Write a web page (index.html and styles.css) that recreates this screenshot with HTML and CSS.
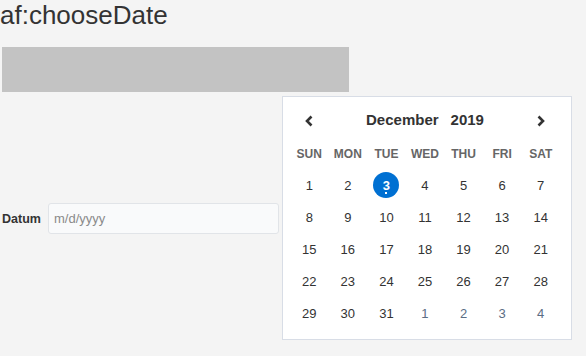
FILE: index.html
```html
<!DOCTYPE html>
<html lang="en">
<head>
    <meta charset="UTF-8">
    <meta name="viewport" content="width=device-width, initial-scale=1.0">
    <title>af:chooseDate</title>
    <link rel="stylesheet" href="styles.css">
</head>
<body>

    <h1 class="page-title">af:chooseDate</h1>

    <div class="placeholder-bar"></div>

    <div class="field-row">
        <label class="field-label" for="datum">Datum</label>
        <div class="date-field">
            <input type="text" id="datum" class="date-input" placeholder="m/d/yyyy">

            <div class="datepicker">
                <div class="dp-header">
                    <button class="dp-nav" title="Previous Month">
                        <svg width="10" height="12" viewBox="0 0 10 12"><path d="M7.5 1.5 L3 6 L7.5 10.5" fill="none" stroke="#333" stroke-width="2.6"/></svg>
                    </button>
                    <div class="dp-month"><span>December</span><span>2019</span></div>
                    <button class="dp-nav" title="Next Month">
                        <svg width="10" height="12" viewBox="0 0 10 12"><path d="M2.5 1.5 L7 6 L2.5 10.5" fill="none" stroke="#333" stroke-width="2.6"/></svg>
                    </button>
                </div>

                <table class="dp-table">
                    <thead>
                        <tr><th>SUN</th><th>MON</th><th>TUE</th><th>WED</th><th>THU</th><th>FRI</th><th>SAT</th></tr>
                    </thead>
                    <tbody>
                        <tr><td>1</td><td>2</td><td><span class="dp-day selected">3</span></td><td>4</td><td>5</td><td>6</td><td>7</td></tr>
                        <tr><td>8</td><td>9</td><td>10</td><td>11</td><td>12</td><td>13</td><td>14</td></tr>
                        <tr><td>15</td><td>16</td><td>17</td><td>18</td><td>19</td><td>20</td><td>21</td></tr>
                        <tr><td>22</td><td>23</td><td>24</td><td>25</td><td>26</td><td>27</td><td>28</td></tr>
                        <tr><td>29</td><td>30</td><td>31</td><td class="other">1</td><td class="other">2</td><td class="other">3</td><td class="other">4</td></tr>
                    </tbody>
                </table>
            </div>
        </div>
    </div>

</body>
</html>
```

FILE: styles.css
```css
html {
    background-color: #f4f4f4;
}
body {
    font-family: "Liberation Sans", Arial, sans-serif;
    background-color: #f4f4f4;
    color: #333;
    margin: 0;
    padding: 0;
    min-height: 356px;
}
.page-title {
    font-size: 26px;
    font-weight: normal;
    line-height: 30px;
    margin: 0;
    color: #333;
}
.placeholder-bar {
    width: 347px;
    height: 45px;
    margin: 17px 0 0 2px;
    background-color: #c3c3c3;
}
.field-row {
    display: flex;
    align-items: center;
    margin-top: 111px;
}
.field-label {
    width: 48px;
    padding-left: 2px;
    box-sizing: border-box;
    font-size: 12.5px;
    font-weight: bold;
    color: #333;
}
.date-field {
    position: relative;
}
.date-input {
    width: 231px;
    height: 31px;
    box-sizing: border-box;
    padding: 0 5px;
    border: 1px solid #e1e4e8;
    border-radius: 3px;
    background-color: #f9fafb;
    font-family: "Liberation Sans", Arial, sans-serif;
    font-size: 13px;
    color: #333;
}
.date-input::placeholder {
    color: #8a8a8a;
}
.datepicker {
    position: absolute;
    left: 234px;
    top: -107px;
    width: 290px;
    box-sizing: border-box;
    padding: 6px 11px 10px 7px;
    background-color: #fff;
    border: 1px solid #d8dde6;
}
.dp-header {
    display: flex;
    align-items: center;
    justify-content: space-between;
    height: 35px;
}
.dp-nav {
    width: 38.6px;
    height: 34px;
    padding: 0;
    border: none;
    background: none;
    display: flex;
    align-items: center;
    justify-content: center;
    cursor: pointer;
}
.dp-month {
    display: flex;
    gap: 12px;
    margin-bottom: 2px;
    font-size: 15px;
    font-weight: bold;
    color: #333;
}
.dp-table {
    width: 270px;
    border-collapse: collapse;
    table-layout: fixed;
}
.dp-table th {
    height: 31px;
    padding: 0;
    font-size: 12px;
    font-weight: bold;
    color: #666;
    text-align: center;
}
.dp-table td {
    height: 32px;
    padding: 0;
    font-size: 13px;
    color: #333;
    text-align: center;
}
.dp-table td.other {
    color: #5b6d84;
}
.dp-day {
    display: inline-flex;
    align-items: center;
    justify-content: center;
    width: 26px;
    height: 26px;
    border-radius: 50%;
}
.dp-day.selected {
    position: relative;
    background-color: #0070d2;
    color: #fff;
    font-weight: bold;
}
.dp-day.selected::after {
    content: "";
    position: absolute;
    left: 12px;
    bottom: 4px;
    width: 2px;
    height: 2px;
    background-color: #fff;
}
```
